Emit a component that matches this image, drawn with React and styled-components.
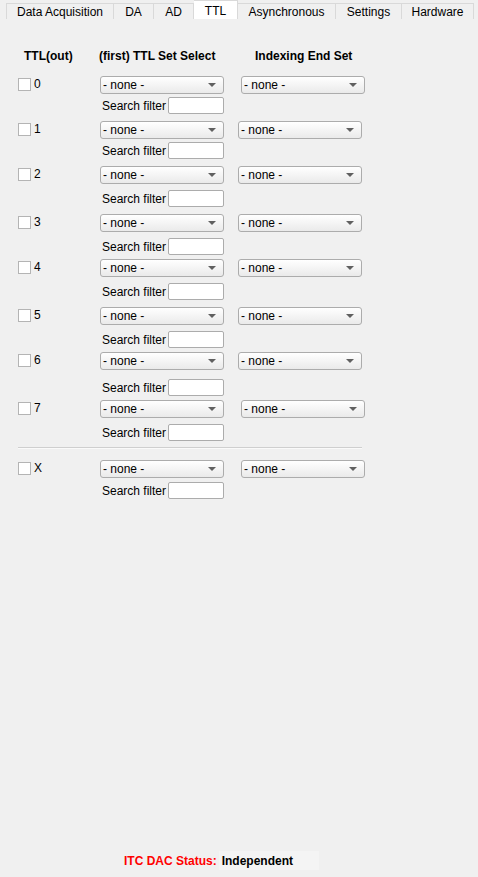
import React from 'react';
import styled, { createGlobalStyle } from 'styled-components';

const GlobalStyle = createGlobalStyle`
  html, body {
    margin: 0;
    padding: 0;
    background: #f0f0f0;
  }
  body {
    font-family: "Liberation Sans", Arial, sans-serif;
    font-size: 12px;
    color: #000;
  }
`;

const tabs = [
  { name: 'Data Acquisition', width: 108 },
  { name: 'DA', width: 40 },
  { name: 'AD', width: 40 },
  { name: 'TTL', width: 44, active: true },
  { name: 'Asynchronous', width: 98 },
  { name: 'Settings', width: 66 },
  { name: 'Hardware', width: 72 },
];

// filterGap: space between the select and the search box, after: space below the row
const channels = [
  { label: '0', filterGap: 3, after: 7, shift: 17 },
  { label: '1', filterGap: 3, after: 7, shift: 14 },
  { label: '2', filterGap: 6, after: 7, shift: 14 },
  { label: '3', filterGap: 6, after: 4, shift: 14 },
  { label: '4', filterGap: 6, after: 7, shift: 14 },
  { label: '5', filterGap: 6, after: 4, shift: 14 },
  { label: '6', filterGap: 9, after: 4, shift: 14 },
  { label: '7', filterGap: 6, after: 0, shift: 17 },
];

const App = () => {
  return (
    <>
      <GlobalStyle />
      <Page>
        <TabBar>
          {tabs.map((t) => (
            <Tab key={t.name} width={t.width} active={t.active}>
              {t.name}
            </Tab>
          ))}
        </TabBar>

        <Pane>
          <HeaderRow>
            <HeadCell>TTL(out)</HeadCell>
            <HeadCell>(first) TTL Set Select</HeadCell>
            <HeadCell>Indexing End Set</HeadCell>
          </HeaderRow>

          {channels.map((c) => (
            <Channel key={c.label} {...c} />
          ))}

          <Separator />

          <Channel label="X" filterGap={4} after={0} shift={17} />
        </Pane>

        <StatusBar>
          <StatusLabel>ITC DAC Status:</StatusLabel>
          <StatusValue>Independent</StatusValue>
        </StatusBar>
      </Page>
    </>
  );
};

const Channel = ({ label, filterGap, after, shift }) => (
  <Row after={after}>
    <CheckCell>
      <CheckBox />
      <CheckLabel>{label}</CheckLabel>
    </CheckCell>
    <SelectColumn gap={filterGap}>
      <Select>- none -</Select>
      <FilterLine>
        <span>Search filter</span>
        <FilterInput />
      </FilterLine>
    </SelectColumn>
    <Select shift={shift}>- none -</Select>
  </Row>
);

export default App;

const Page = styled.div`
  width: 478px;
  height: 877px;
  display: flex;
  flex-direction: column;
  overflow: hidden;
`;

const TabBar = styled.div`
  display: flex;
  align-items: flex-end;
  height: 19px;
  padding-left: 6px;
`;

const Tab = styled.div`
  box-sizing: border-box;
  width: ${(p) => p.width}px;
  height: ${(p) => (p.active ? 19 : 16)}px;
  display: flex;
  align-items: center;
  justify-content: center;
  padding-top: ${(p) => (p.active ? 2 : 0)}px;
  background: ${(p) => (p.active ? '#ffffff' : '#f0f0f0')};
  border-top: 1px solid #d9d9d9;
  border-right: 1px solid #d9d9d9;
  &:first-child {
    border-left: 1px solid #d9d9d9;
  }
  color: #000;
  font-size: 12px;
  white-space: nowrap;
`;

const Pane = styled.div`
  flex: 1;
  padding: 30px 0 0 18px;
`;

const HeaderRow = styled.div`
  display: grid;
  grid-template-columns: 81px 156px auto;
  margin-bottom: 13px;
`;

const HeadCell = styled.div`
  font-weight: bold;
  font-size: 12px;
  &:first-child {
    padding-left: 6px;
  }
`;

const Row = styled.div`
  display: grid;
  grid-template-columns: 82px 124px auto;
  align-items: start;
  margin-bottom: ${(p) => p.after}px;
`;

const CheckCell = styled.div`
  display: flex;
  align-items: center;
  padding-top: 2px;
`;

const CheckBox = styled.div`
  box-sizing: border-box;
  width: 13px;
  height: 13px;
  background: #fff;
  border: 1px solid #b4b4b4;
`;

const CheckLabel = styled.span`
  margin-left: 3px;
  margin-top: -1px;
  font-size: 12px;
`;

const SelectColumn = styled.div`
  display: flex;
  flex-direction: column;
  gap: ${(p) => p.gap}px;
`;

const Select = styled.div`
  box-sizing: border-box;
  width: 124px;
  height: 18px;
  margin-left: ${(p) => p.shift || 0}px;
  border: 1px solid #acacac;
  border-radius: 3px;
  background: linear-gradient(#ffffff, #eaeaea);
  padding-left: 2px;
  display: flex;
  align-items: center;
  font-size: 12px;
  position: relative;

  &::after {
    content: '';
    position: absolute;
    right: 7px;
    top: 6px;
    border-left: 4px solid transparent;
    border-right: 4px solid transparent;
    border-top: 4px solid #606060;
  }
`;

const FilterLine = styled.div`
  display: flex;
  align-items: center;
  justify-content: space-between;
  padding-left: 2px;
  font-size: 12px;
`;

const FilterInput = styled.div`
  box-sizing: border-box;
  width: 56px;
  height: 17px;
  background: #fff;
  border: 1px solid #acacac;
  border-radius: 2px;
`;

const Separator = styled.div`
  width: 344px;
  height: 1px;
  background: #cfcfcf;
  border-bottom: 1px solid #fafafa;
  margin: 6px 0 11px;
`;

const StatusBar = styled.div`
  display: flex;
  align-items: center;
  padding-left: 124px;
  height: 19px;
  margin-bottom: 7px;
  font-weight: bold;
  font-size: 12px;
`;

const StatusLabel = styled.span`
  color: #ff0000;
  margin-right: 2px;
`;

const StatusValue = styled.span`
  box-sizing: border-box;
  width: 100px;
  height: 19px;
  padding-left: 3px;
  display: flex;
  align-items: center;
  background: #f4f4f4;
  color: #000;
`;
